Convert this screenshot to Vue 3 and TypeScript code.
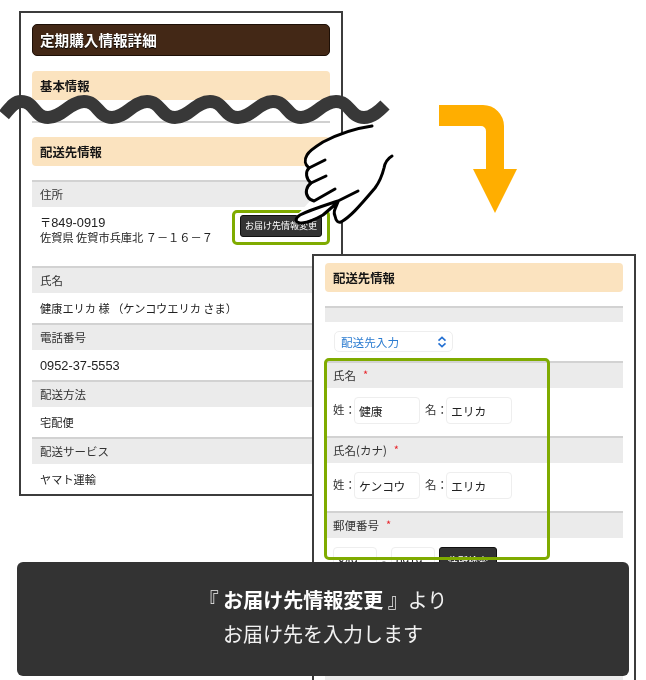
<script setup lang="ts">
interface InfoRow {
  label: string
  value: string
  numeric?: boolean
}

const infoRows: InfoRow[] = [
  { label: '氏名', value: '健康エリカ 様 （ケンコウエリカ さま）' },
  { label: '電話番号', value: '0952-37-5553', numeric: true },
  { label: '配送方法', value: '宅配便' },
  { label: '配送サービス', value: 'ヤマト運輸' },
]

const nameFields = [
  { label: '氏名', sei: '健康', mei: 'エリカ' },
  { label: '氏名(カナ)', sei: 'ケンコウ', mei: 'エリカ' },
]
</script>

<template>
  <div class="canvas">
    <section class="screen screen-detail">
      <h1 class="page-title">定期購入情報詳細</h1>
      <h2 class="section-title first">基本情報</h2>
      <hr class="divider" />
      <h2 class="section-title">配送先情報</h2>

      <div class="rows">
        <div class="row-label">住所</div>
        <div class="address">
          <p>〒<span class="num">849-0919</span><br />佐賀県 佐賀市兵庫北 ７－１６－７</p>
          <button class="dark-btn change-btn">お届け先情報変更</button>
        </div>
        <template v-for="row in infoRows" :key="row.label">
          <div class="row-label">{{ row.label }}</div>
          <div class="row-value" :class="{ num: row.numeric }">{{ row.value }}</div>
        </template>
      </div>
    </section>

    <section class="screen screen-form">
      <h2 class="section-title">配送先情報</h2>
      <div class="row-label blank"></div>
      <div class="select-box">
        <span>配送先入力</span>
        <svg width="10" height="12" viewBox="0 0 10 12" fill="none" stroke="#2470d2" stroke-width="1.6">
          <path d="M1.5 4.6 5 1.4l3.5 3.2" />
          <path d="M1.5 7.4 5 10.6l3.5-3.2" />
        </svg>
      </div>

      <template v-for="field in nameFields" :key="field.label">
        <div class="row-label">{{ field.label }}<span class="req">*</span></div>
        <div class="form-row">
          <label>姓：</label>
          <span class="field">{{ field.sei }}</span>
          <label class="second">名：</label>
          <span class="field">{{ field.mei }}</span>
        </div>
      </template>

      <div class="row-label">郵便番号<span class="req">*</span></div>
      <div class="zip-row">
        <span class="field zip">849</span>
        <span class="dash">-</span>
        <span class="field zip">0919</span>
        <button class="dark-btn search-btn">住所検索</button>
      </div>
      <div class="row-label blank"></div>

      <div class="green-frame"></div>
    </section>

    <div class="green-frame btn-frame"></div>

    <svg class="wave" width="400" height="40" viewBox="0 0 400 40" fill="none">
      <path
        d="M4 21C10 14 14 7.500 21 7.500C35 7.500 34 23.500 48 23.500C62 23.500 70 7.500 84 7.500C98 7.500 98 23.500 112 23.500C126 23.500 133 7.500 147 7.500C161 7.500 161 23.500 175 23.500C189 23.500 196 7.500 210 7.500C224 7.500 224 23.500 238 23.500C252 23.500 259 7.500 273 7.500C287 7.500 287 23.500 301 23.500C315 23.500 322 7.500 336 7.500C350 7.500 350 23.500 364 23.500C372 23.500 378 18 385 11"
        stroke="#383838"
        stroke-width="13"
      />
    </svg>

    <svg class="hand" width="110" height="110" viewBox="290 120 110 110" fill="none">
      <path
        fill="#fff"
        d="M372 126C358 128 342 132 323 142C315 147 309 151 307 155C304 160 305 165 309 168C305 172 306 179 311 183C306 187 305 193 308 197L311 200L298 214C294 218 295 223 302 223L323 215L338 202C335 209 333 212 335 216C336 221 338 223 341 222C350 217 358 208 375 188C381 180 383 172 384 168C385 162 387 159 392 156Z"
      />
      <g stroke="#000" stroke-width="3" stroke-linecap="round" stroke-linejoin="round">
        <path d="M372 126C358 128 342 132 323 142C315 147 309 151 307 155C304 160 305 165 309 168L325 160" />
        <path d="M309 168C305 172 306 179 311 183L326 176" />
        <path d="M311 183C306 187 305 193 308 197C309 199 311 200 314 201L335 189" />
        <path d="M358 191L338 201C320 207 310 210 300 215C295 218 294 223 302 223C310 222 316 219 323 215L338 202C335 209 333 212 335 216C336 221 338 223 341 222C350 217 358 208 375 188C381 180 383 172 384 168C385 162 387 159 392 156" />
      </g>
    </svg>

    <svg class="arrow" width="80" height="110" viewBox="439 105 80 110">
      <path
        fill="#ffae00"
        d="M439 105H483A21 21 0 0 1 504 126V169H517L495 213L473 169H486V131A5 5 0 0 0 481 126H439Z"
      />
    </svg>

    <div class="caption">
      <p>『 <strong>お届け先情報変更</strong> 』より</p>
      <p>お届け先を入力します</p>
    </div>
  </div>
</template>

<style scoped>
.canvas {
  position: relative;
  width: 646px;
  height: 680px;
  overflow: hidden;
  background: #fff;
  color: #222;
  font-family: "Noto Sans CJK JP", "Liberation Sans", sans-serif;
  font-size: 11.2px;
  filter: blur(0.3px);
}

h1,
h2,
p {
  margin: 0;
}

.num {
  font-family: "Liberation Sans", sans-serif;
  font-size: 12.8px;
}

.screen {
  position: absolute;
  box-sizing: border-box;
  width: 324px;
  border: 2px solid #3c3c3c;
  background: #fff;
}

.screen-detail {
  left: 19px;
  top: 11px;
  height: 485px;
  padding: 11px 11px 0;
}

.screen-form {
  left: 312px;
  top: 254px;
  height: 440px;
  padding: 7px 11px 0;
}

.page-title {
  box-sizing: border-box;
  height: 32px;
  padding-left: 7px;
  border: 1px solid #1d0f06;
  border-radius: 5px;
  background: #432816;
  color: #fff;
  font-size: 14.6px;
  font-weight: 700;
  line-height: 29px;
  text-shadow: 0 1px 1px #000;
}

.section-title {
  height: 29px;
  padding-left: 8px;
  border-radius: 4px;
  background: #fbe3bf;
  color: #151515;
  font-size: 12.4px;
  font-weight: 700;
  line-height: 30px;
}

.section-title.first {
  margin-top: 15px;
}

.divider {
  height: 2px;
  margin: 21px 0 14px;
  border: 0;
  background: #d0d0d0;
}

.rows {
  margin-top: 14px;
}

.row-label {
  box-sizing: border-box;
  height: 27px;
  padding-left: 8px;
  border-top: 2px solid #d2d2d2;
  background: #ebebeb;
  color: #333;
  font-size: 11.5px;
  line-height: 25px;
}

.screen-form .row-label {
  line-height: 24px;
}

.row-label.blank {
  height: 16px;
  margin-top: 14px;
}

.zip-row + .row-label.blank {
  margin-top: 0;
}

.address {
  display: flex;
  justify-content: space-between;
  height: 59px;
  padding: 7px 8px 0;
  box-sizing: border-box;
  line-height: 15px;
}

.address p {
  padding-top: 1px;
}

.dark-btn {
  border: 1px solid #111;
  border-radius: 3px;
  background: #333;
  color: #fff;
  font-family: inherit;
  padding: 0;
}

.change-btn {
  width: 82px;
  height: 22px;
  margin-top: 1px;
  font-size: 9px;
  line-height: 20px;
}

.row-value {
  height: 30px;
  padding-left: 8px;
  line-height: 31px;
}

.select-box {
  display: flex;
  align-items: center;
  justify-content: space-between;
  box-sizing: border-box;
  width: 119px;
  height: 21px;
  margin: 9px 0 9px 9px;
  padding: 0 5px 0 6px;
  border: 1px solid #eee;
  border-radius: 5px;
  color: #2a7bd0;
  font-size: 11.6px;
}

.req {
  margin-left: 7px;
  color: #e8232a;
  font-size: 11px;
  line-height: 0;
  vertical-align: 1px;
}

.form-row,
.zip-row {
  display: flex;
  align-items: flex-start;
  box-sizing: border-box;
  height: 48px;
  padding: 9px 0 0 8px;
}

.form-row label {
  width: 21px;
  line-height: 25px;
  color: #333;
  font-size: 11.5px;
}

.form-row .second {
  margin-left: 5px;
}

.field {
  box-sizing: border-box;
  width: 66px;
  height: 27px;
  padding-left: 4px;
  border: 1px solid #eee;
  border-radius: 4px;
  line-height: 26px;
  font-size: 11.8px;
}

.field.zip {
  width: 44px;
}

.dash {
  width: 14px;
  text-align: center;
  line-height: 26px;
  color: #999;
}

.search-btn {
  width: 58px;
  height: 27px;
  margin-left: 4px;
  font-size: 10px;
}

.zip-row {
  height: 134px;
}

.green-frame {
  position: absolute;
  left: 10px;
  top: 102px;
  box-sizing: border-box;
  width: 226px;
  height: 202px;
  border: 3px solid #7fab00;
  border-radius: 5px;
}

.btn-frame {
  left: 232px;
  top: 210px;
  width: 98px;
  height: 35px;
}

.wave {
  position: absolute;
  left: 0;
  top: 94px;
}

.hand {
  position: absolute;
  left: 290px;
  top: 120px;
}

.arrow {
  position: absolute;
  left: 439px;
  top: 105px;
}

.caption {
  position: absolute;
  left: 17px;
  top: 562px;
  box-sizing: border-box;
  width: 612px;
  height: 114px;
  padding-top: 21px;
  border-radius: 6px;
  background: #333;
  color: #f2f2f2;
  font-size: 20px;
  line-height: 34px;
  text-align: center;
}

.caption strong {
  color: #fff;
}
</style>
